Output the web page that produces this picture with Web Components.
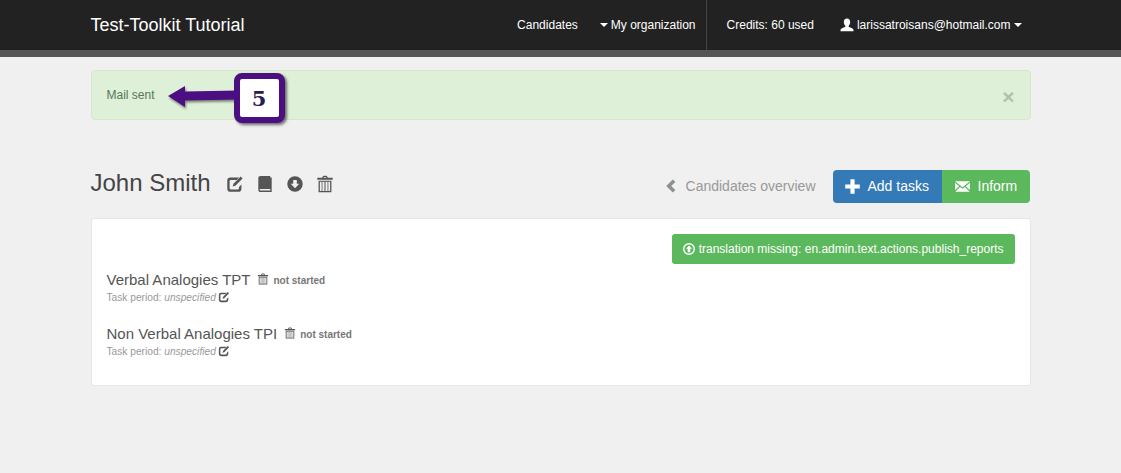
<!DOCTYPE html>
<html lang="en">
<head>
<meta charset="utf-8">
<title>Test-Toolkit Tutorial</title>
<style>
  html, body { margin: 0; height: 100%; }
  body {
    background: #f0f0f0;
    color: #555;
    font: 14px "Liberation Sans", Arial, sans-serif;
    overflow: hidden;
  }
</style>
</head>
<body>
<tt-navbar></tt-navbar>
<tt-page>
  <tt-alert>Mail sent</tt-alert>
  <tt-callout slot="overlay">5</tt-callout>
  <tt-header name="John Smith"></tt-header>
  <tt-panel>
    <tt-task name="Verbal Analogies TPT"></tt-task>
    <tt-task name="Non Verbal Analogies TPI"></tt-task>
  </tt-panel>
</tt-page>

<script>
// glyph shapes, all on a 14x14 box
const ICONS = {
  edit: '<path d="M10.2 2H3.400A2.400 2.400 0 0 0 1 4.400v6.200A2.400 2.400 0 0 0 3.400 13h6.200a2.400 2.400 0 0 0 2.400-2.400V7.400l-1.900 1.900v1a.9.9 0 0 1-.9.9H3.700a.9.9 0 0 1-.9-.9V4.700a.9.9 0 0 1 .9-.9h4.600z"/><path d="M11.400 1.200l1.500 1.500-5.600 5.700-2.100.6.6-2.100z"/>',
  book: '<path d="M1.800 2.400C1.800 1.400 2.500.8 3.500.8h7.600v10.100H3.600c-.5 0-.8.2-.8.6s.3.6.8.6h7.500V2h1.100v11.200H3.500c-1 0-1.700-.6-1.700-1.600z"/>',
  download: '<path fill-rule="evenodd" d="M7 1a6 6 0 1 1 0 12A6 6 0 0 1 7 1zM5.600 3.800v3H3.700L7 10.400l3.300-3.600H8.400v-3z"/>',
  upload: '<path fill-rule="evenodd" d="M7 1a6 6 0 1 1 0 12A6 6 0 0 1 7 1zm0 1.400a4.600 4.600 0 1 0 0 9.200 4.600 4.600 0 0 0 0-9.200zM7 3.400l3 3.300H8.300v3.600H5.700V6.700H4z"/>',
  trash: '<path fill-rule="evenodd" d="M4.800 2.200C4.900 1.100 5.600.6 7 .6s2.100.5 2.200 1.600H13v1.500H1V2.200zM5.800 2.200h2.400C8.100 1.700 7.700 1.500 7 1.500s-1.100.2-1.200.7zM2 4.400h10v9H2zM3 5.300v7.100h1.400V5.300zM5 5.300v7.100h1.600V5.300zM7.400 5.300v7.100H9V5.300zM9.600 5.300v7.100H11V5.300z"/>',
  plus: '<path d="M5.300 1h3.400v4.300H13v3.400H8.700V13H5.300V8.700H1V5.300h4.300z"/>',
  mail: '<path d="M0 2.200h14L7 7.700z"/><path d="M0 3.600l3.900 3.100L0 10.300zM14 3.600l-3.900 3.100 3.900 3.600zM4.700 7.400L7 9.200l2.300-1.800 4.400 4.400H.3z"/>',
  user: '<path d="M7 .6c2 0 3.200 1.500 3.200 3.500 0 1.500-.7 3-1.500 3.700v1.200c2.300.8 4.800 1.600 4.800 3.100v1.100H.5v-1.100c0-1.500 2.500-2.300 4.800-3.100V7.800C4.500 7.100 3.800 5.600 3.800 4.100 3.800 2.100 5 .6 7 .6z"/>',
  chevron: '<path d="M8.800.6l2.600 2.400L7.200 7l4.200 4-2.600 2.400L2.200 7z"/>'
};

class TtIcon extends HTMLElement {
  connectedCallback() {
    const size = this.getAttribute('size') || 14;
    this.attachShadow({ mode: 'open' }).innerHTML = `
      <style>
        :host { display: inline-flex; flex: none; }
        svg { display: block; fill: currentColor; }
      </style>
      <svg width="${size}" height="${size}" viewBox="0 0 14 14">${ICONS[this.getAttribute('name')]}</svg>`;
  }
}

class TtNavbar extends HTMLElement {
  connectedCallback() {
    this.attachShadow({ mode: 'open' }).innerHTML = `
      <style>
        :host { display: block; background: #222; border-bottom: 7px solid #555; color: #fff; }
        .inner { width: 940px; height: 50px; margin: 0 auto; display: flex; align-items: center; box-sizing: border-box; padding-right: 9px; }
        .brand { font-size: 18px; margin-right: auto; }
        nav { display: flex; align-items: center; height: 100%; font-size: 12px; }
        .item { display: flex; align-items: center; gap: 3px; }
        .caret { width: 0; height: 0; border: 4px solid transparent; border-top-color: #fff; border-bottom-width: 0; }
        .candidates { margin-right: 22px; }
        .org { padding-right: 10px; }
        .divider { width: 1px; height: 100%; background: #444; margin-right: 20px; }
        .credits { margin-right: 26px; }
      </style>
      <div class="inner">
        <span class="brand">Test-Toolkit Tutorial</span>
        <nav>
          <span class="item candidates">Candidates</span>
          <span class="item org"><span class="caret"></span>My organization</span>
          <span class="divider"></span>
          <span class="item credits">Credits: 60 used</span>
          <span class="item"><tt-icon name="user" size="14"></tt-icon>larissatroisans@hotmail.com<span class="caret"></span></span>
        </nav>
      </div>`;
  }
}

class TtPage extends HTMLElement {
  connectedCallback() {
    this.attachShadow({ mode: 'open' }).innerHTML = `
      <style>
        :host { display: block; width: 940px; margin: 13px auto 0; position: relative; }
      </style>
      <slot></slot>
      <slot name="overlay"></slot>`;
  }
}

class TtAlert extends HTMLElement {
  connectedCallback() {
    this.attachShadow({ mode: 'open' }).innerHTML = `
      <style>
        :host {
          display: flex; align-items: center; justify-content: space-between;
          box-sizing: border-box; height: 50px; padding: 0 15px 0 15px;
          background: #dff0d8; border: 1px solid #d6e9c6; border-radius: 4px;
          color: #56775a; font-size: 12px;
        }
        .close { color: #b2bfae; font-size: 21px; font-weight: bold; line-height: 1; padding-top: 2px; }
      </style>
      <slot></slot>
      <span class="close">×</span>`;
  }
}

// tutorial marker laid over the page, arrow + numbered box
class TtCallout extends HTMLElement {
  connectedCallback() {
    this.attachShadow({ mode: 'open' }).innerHTML = `
      <style>
        :host { position: absolute; left: 77px; top: 3px; width: 120px; height: 52px; display: block; }
        svg { position: absolute; left: 0; top: 0; filter: drop-shadow(1px 2px 1px rgba(0,0,0,.45)); }
        .box {
          position: absolute; left: 66px; top: 0; width: 51px; height: 50px; box-sizing: border-box;
          background: #fff; border: 6px solid #4b0f82; border-radius: 8px;
          box-shadow: 2px 2px 3px rgba(0,0,0,.55);
          display: flex; align-items: center; justify-content: center;
          color: #2c1a52; font: bold 21px "DejaVu Serif", "Liberation Serif", serif;
        }
      </style>
      <svg width="72" height="40" viewBox="0 0 72 40">
        <path fill="#4b0f82" d="M0 23L17 13V18.500L70 17.500V26.500L17 27.500V34z"/>
      </svg>
      <div class="box"><slot></slot></div>`;
  }
}

class TtHeader extends HTMLElement {
  connectedCallback() {
    this.attachShadow({ mode: 'open' }).innerHTML = `
      <style>
        :host { display: flex; align-items: center; margin-top: 50px; height: 33px; padding-right: 1px; }
        h1 { margin: 0; font-size: 24px; font-weight: normal; color: #444; margin-right: 15px; position: relative; top: -4px; }
        .tools { display: flex; gap: 12px; color: #555; margin-right: auto; position: relative; top: -3px; }
        .back { display: flex; align-items: center; gap: 8px; color: #999; margin-right: 17px; padding-bottom: 1px; }
        .back tt-icon { color: #8f8f8f; }
        .btn { display: flex; align-items: center; height: 33px; box-sizing: border-box; color: #fff; white-space: nowrap; padding-bottom: 1px; }
        .primary { width: 109px; padding-left: 11px; gap: 7px; background: #337ab7; border-radius: 4px 0 0 4px; }
        .success { width: 88px; padding-left: 13px; gap: 8px; background: #5cb85c; border-radius: 0 4px 4px 0; }
      </style>
      <h1>${this.getAttribute('name')}</h1>
      <div class="tools">
        <tt-icon name="edit" size="18"></tt-icon>
        <tt-icon name="book" size="18"></tt-icon>
        <tt-icon name="download" size="18"></tt-icon>
        <tt-icon name="trash" size="18"></tt-icon>
      </div>
      <span class="back"><tt-icon name="chevron" size="14"></tt-icon>Candidates overview</span>
      <span class="btn primary"><tt-icon name="plus" size="17"></tt-icon>Add tasks</span>
      <span class="btn success"><tt-icon name="mail" size="15"></tt-icon>Inform</span>`;
  }
}

class TtPanel extends HTMLElement {
  connectedCallback() {
    this.attachShadow({ mode: 'open' }).innerHTML = `
      <style>
        :host {
          display: block; box-sizing: border-box; height: 168px; margin-top: 15px; padding: 15px;
          background: #fff; border: 1px solid #e6e6e6; border-radius: 3px;
        }
        .actions { display: flex; justify-content: flex-end; }
        .publish {
          display: flex; align-items: center; gap: 3px; height: 30px; padding: 0 11px 0 10px; box-sizing: border-box;
          background: #5cb85c; color: #fff; font-size: 12px; border-radius: 3px;
        }
      </style>
      <div class="actions">
        <span class="publish"><tt-icon name="upload" size="14"></tt-icon>translation missing: en.admin.text.actions.publish_reports</span>
      </div>
      <slot></slot>`;
  }
}

class TtTask extends HTMLElement {
  connectedCallback() {
    this.attachShadow({ mode: 'open' }).innerHTML = `
      <style>
        :host { display: block; margin-top: 6px; height: 48px; }
        .title { display: flex; align-items: center; height: 18px; color: #555; font-size: 15px; }
        .title tt-icon { margin: 0 4px 0 7px; color: #555; }
        .status { font-size: 10px; font-weight: bold; color: #777; position: relative; top: 1px; }
        .period { display: flex; align-items: center; gap: 2px; margin-top: 3px; font-size: 10.200px; color: #999; }
        .period tt-icon { color: #555; }
      </style>
      <div class="title">${this.getAttribute('name')}<tt-icon name="trash" size="12"></tt-icon><span class="status">not started</span></div>
      <div class="period"><span>Task period: <i>unspecified</i></span><tt-icon name="edit" size="12"></tt-icon></div>`;
  }
}

customElements.define('tt-icon', TtIcon);
customElements.define('tt-navbar', TtNavbar);
customElements.define('tt-page', TtPage);
customElements.define('tt-alert', TtAlert);
customElements.define('tt-callout', TtCallout);
customElements.define('tt-header', TtHeader);
customElements.define('tt-panel', TtPanel);
customElements.define('tt-task', TtTask);
</script>
</body>
</html>
